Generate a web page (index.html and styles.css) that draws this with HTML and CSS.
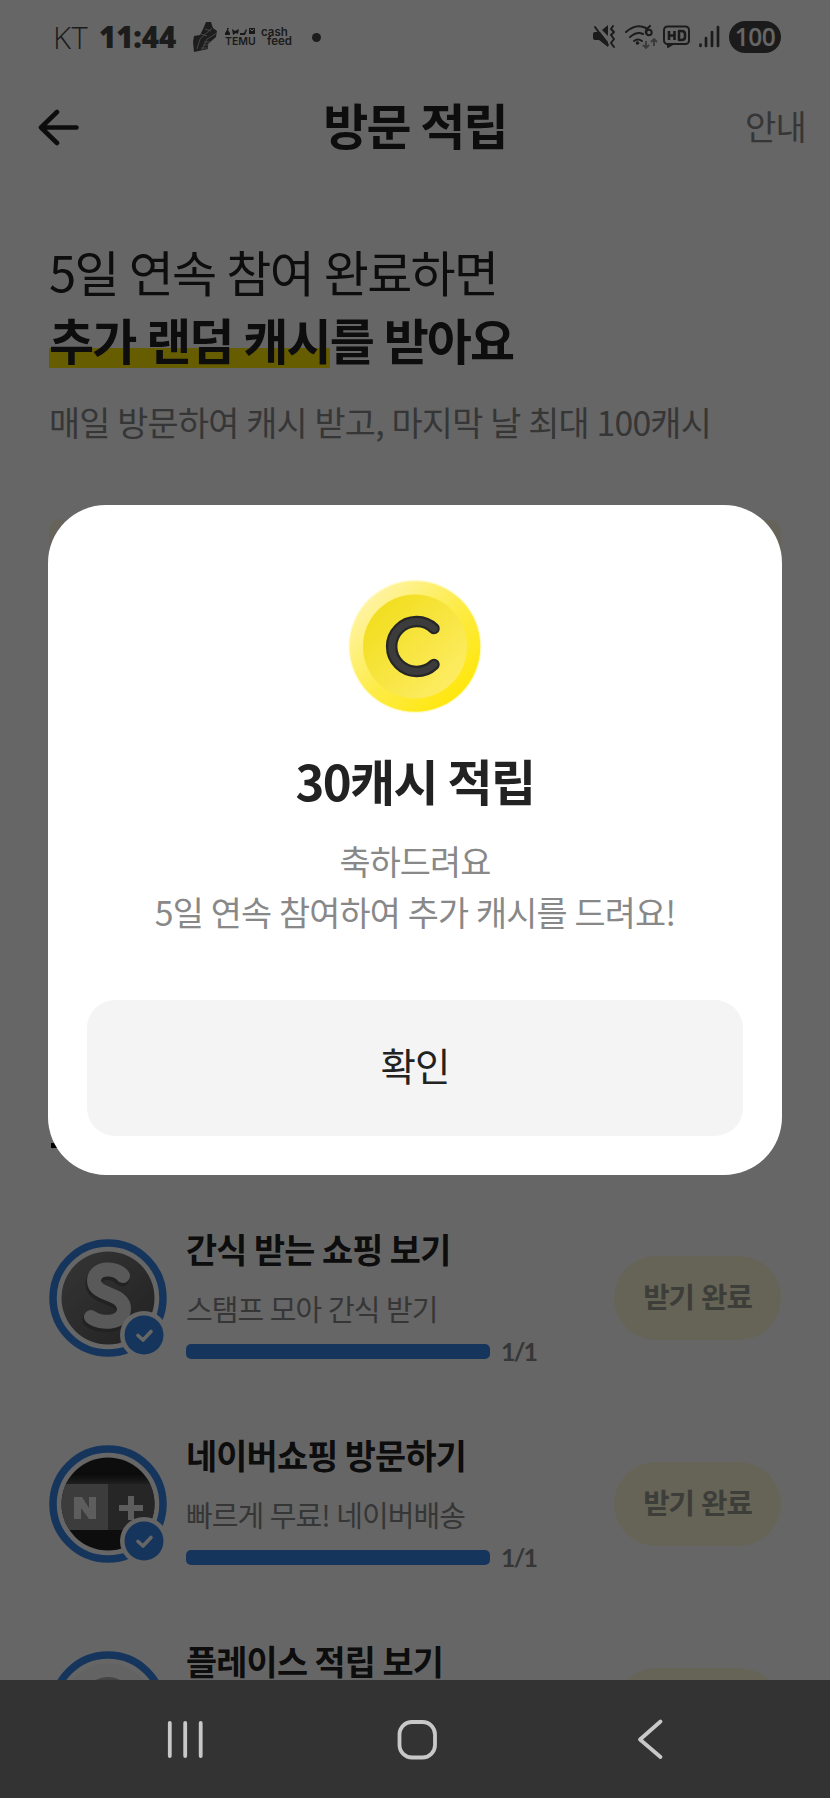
FILE: index.html
```html
<!DOCTYPE html>
<html lang="ko">
<head>
<meta charset="utf-8">
<title>방문 적립</title>
<link rel="stylesheet" href="styles.css">
</head>
<body>
<div class="screen">
  <main class="page">
    <div class="status">
      <span class="carrier">KT</span>
      <span class="clock">11:44</span>
      <svg class="shoe" width="26" height="32" viewBox="0 0 26 32"><path d="M14 1 19 1 21 7 25 10 24 16 16 23 16 28 2 31 1 21 2 15 8 14 11 8Z" fill="#4a4a4a"/><path d="M20 7 8 18 5 28M25 12 15 18 10 29M12 21h7M11 24h6M9 27h7M13 8l6 2M9 13l6 2" stroke="#b9b9b9" stroke-width=".9" fill="none"/></svg>
      <span class="temu"><svg width="30" height="7" viewBox="0 0 30 7"><path d="M2 0h2l-1 2 2 3v2H0V5l2-3ZM7 1l3 2 4-2-1 5-2-1-3 2ZM15 5h4l2-4 1 1-2 5h-5ZM24 0h6v6h-6Z" fill="#3f3f3f"/><path d="m25 1 2 2 2-2" stroke="#fff" fill="none"/></svg><b>TEMU</b></span>
      <span class="cashfeed"><b>cash</b><b class="feed">feed</b></span>
      <i class="dot"></i>
      <span class="spacer"></span>
      <svg width="190" height="34" viewBox="592 20 190 34" class="sysicons">
        <g fill="#454545" stroke="none"><path d="M593 34q0-2 2-2h5l8 10v5l-9-7h-4q-2 0-2-2ZM602 30l6-5v11Z"/></g>
        <g fill="none" stroke="#454545" stroke-width="2" stroke-linecap="round" stroke-linejoin="round">
          <path d="m595 27 13 18"/><path d="m613 26-2 3 3 3-3 3 3 4-3 4 3 4" />
          <path d="M626 32q10-9 20-4M630 37q7-6 13-3M634 41q4-3 8 0"/><path d="M650 26q-5 4-4 7" stroke-width="2.2"/><circle cx="649" cy="32.500" r="2.700"/>
          <rect x="664" y="26.500" width="25" height="17.500" rx="3.500"/><path d="M668 44v3l5-3"/>
          <path d="M669 31v9M674.500 31v9M669 35.500h5.500M679 31v9h2.500q3.500 0 3.500-3v-3q0-3-3.500-3Z" stroke-width="2.600" stroke-linecap="butt"/>
          <path d="M700.500 44.500v1.500M706 38v8M712 32v14M718 27v19" stroke-width="2.700"/>
        </g>
        <circle cx="637.500" cy="43" r="1.800" fill="#454545"/>
        <path d="M646 41v7m-3-3 3 3 3-3M654 46v-7m-3 3 3-3 3 3" fill="none" stroke="#8f8f8f" stroke-width="1.800"/>
      </svg>
      <span class="battery">100</span>
    </div>
    <header class="bar">
      <svg class="back" width="44" height="38" viewBox="0 0 44 38"><path d="M20 4 4 19.500l16 15.500M4 19.500h35.500" fill="none" stroke="#222" stroke-width="4.600" stroke-linecap="round" stroke-linejoin="round"/></svg>
      <h1>방문 적립</h1>
      <span class="guide">안내</span>
    </header>
    <section class="intro">
      <p class="lead">5일 연속 참여 완료하면</p>
      <p class="lead strong"><span class="mark">추가 랜덤 캐시</span>를 받아요</p>
      <p class="sub">매일 방문하여 캐시 받고, 마지막 날 최대 100캐시</p>
    </section>
    <section class="stamps"></section>
    <hr class="rule">
    <ul class="missions">
      <li class="mission">
        <div class="avatar">
          <svg width="118" height="118" viewBox="0 0 118 118">
            <defs><linearGradient id="dark" x1="0" x2="1" y2="1"><stop stop-color="#858585"/><stop offset="1" stop-color="#555"/></linearGradient></defs>
            <circle cx="59" cy="59" r="55" fill="#fff" class="ring"/>
            <circle cx="59" cy="59" r="46.500" fill="url(#dark)"/>
            <path d="M74 38C68 29 45 28 45 43C45 58 75 54 75 71C75 87 50 86 42 79" fill="none" stroke="#555" stroke-width="15" stroke-linecap="round" transform="translate(-1 2)"/>
            <path d="M74 37C68 28 45 27 45 42C45 57 75 53 75 70C75 86 50 85 42 78" fill="none" stroke="#dedede" stroke-width="14" stroke-linecap="round"/>
          </svg>
          <svg class="badge" width="48" height="48" viewBox="0 0 48 48"><circle cx="24" cy="24" r="24" fill="#fff"/><circle cx="24" cy="24" r="19.500" class="blue"/><path d="m18 24.500 5 4.500 8-8.500" fill="none" stroke="#fff" stroke-width="3.600" stroke-linecap="round" stroke-linejoin="round"/></svg>
        </div>
        <div class="info"><h2>간식 받는 쇼핑 보기</h2><p>스탬프 모아 간식 받기</p><div class="progress"><i></i><b>1/1</b></div></div>
        <span class="done">받기 완료</span>
      </li>
      <li class="mission">
        <div class="avatar">
          <svg width="118" height="118" viewBox="0 0 118 118">
            <defs><clipPath id="disc"><circle cx="59" cy="59" r="46.500"/></clipPath><linearGradient id="lid" x2="0" y2="1"><stop stop-color="#181818"/><stop offset="1" stop-color="#555"/></linearGradient></defs>
            <circle cx="59" cy="59" r="55" fill="#fff" class="ring"/>
            <g clip-path="url(#disc)"><path fill="#222" d="M0 0h118v118H0z"/><path d="M26 28h66l14 12H12Z" fill="url(#lid)"/><path d="M10 39h49v46H10z" fill="#969696"/><path d="M59 39h50v46H59z" fill="#606060"/></g>
            <path d="M25 74V52h8l7 11V52h7v22h-7l-8-11v11Z" fill="#e8e8e8"/><path d="M82 51v24M70 63h24" stroke="#e8e8e8" stroke-width="6" />
          </svg>
          <svg class="badge" width="48" height="48" viewBox="0 0 48 48"><circle cx="24" cy="24" r="24" fill="#fff"/><circle cx="24" cy="24" r="19.500" class="blue"/><path d="m18 24.500 5 4.500 8-8.500" fill="none" stroke="#fff" stroke-width="3.600" stroke-linecap="round" stroke-linejoin="round"/></svg>
        </div>
        <div class="info"><h2>네이버쇼핑 방문하기</h2><p>빠르게 무료! 네이버배송</p><div class="progress"><i></i><b>1/1</b></div></div>
        <span class="done">받기 완료</span>
      </li>
      <li class="mission">
        <div class="avatar"><svg width="118" height="118" viewBox="0 0 118 118"><circle cx="59" cy="59" r="55" fill="#fff" class="ring"/><circle cx="59" cy="59" r="46.500" fill="#f7f7f7"/><circle cx="59" cy="52" r="26" fill="#aaa"/></svg></div>
        <div class="info"><h2>플레이스 적립 보기</h2></div>
        <span class="done"></span>
      </li>
    </ul>
  </main>
  <div class="overlay">
    <div class="modal">
      <svg class="coin" width="136" height="136" viewBox="0 0 136 136">
        <defs>
          <linearGradient id="rim" x1=".15" y1=".15" x2=".85" y2=".85"><stop stop-color="#fff3a0"/><stop offset=".5" stop-color="#fdec4a"/><stop offset="1" stop-color="#ffe70e"/></linearGradient>
          <linearGradient id="face" x1=".15" y1=".15" x2=".85" y2=".85"><stop stop-color="#f2de20"/><stop offset="1" stop-color="#fdec62"/></linearGradient>
        </defs>
        <circle cx="68" cy="68.500" r="66.500" fill="#fffbc8"/>
        <circle cx="68" cy="68.500" r="65.300" fill="url(#rim)"/>
        <circle cx="68" cy="68.500" r="52" fill="url(#face)"/>
        <path d="M87 50.500A25 25 0 1 0 87 86.500" fill="none" stroke="#262626" stroke-width="11.500" stroke-linecap="round"/>
        <path d="M87 50.500A25 25 0 1 0 87 86.500" fill="none" stroke="#3c3c3c" stroke-width="7" stroke-linecap="round"/>
      </svg>
      <h2 class="modal-title">30캐시 적립</h2>
      <p class="modal-text">축하드려요<br>5일 연속 참여하여 추가 캐시를 드려요!</p>
      <button class="confirm">확인</button>
    </div>
  </div>
  <nav class="navbar">
    <svg width="830" height="118" viewBox="0 0 830 118"><g fill="none" stroke="#c8c8c8" stroke-width="3.800" stroke-linecap="round" stroke-linejoin="round"><path d="M169.800 43v33M185.200 43v33M200.700 43v33"/><rect x="399.500" y="42" width="35.500" height="35.500" rx="12.500"/><path d="M660.500 41.500 640 59.500l20.500 17.500"/></g></svg>
  </nav>
</div>
</body>
</html>
```
FILE: styles.css
```css
* { box-sizing: border-box; margin: 0; padding: 0; }
body { font-family: "Noto Sans CJK KR", sans-serif; color: #222; background: #fff; }
.screen { position: relative; width: 830px; height: 1798px; overflow: hidden; }
.page { height: 1680px; overflow: hidden; }

.status { display: flex; align-items: center; height: 74px; padding: 0 49px 0 53px; color: #484848; }
.carrier { width: 46px; font: 300 31px/1 "Open Sans", sans-serif; letter-spacing: .5px; }
.clock { width: 93px; font: 800 29.500px/1 "Open Sans", sans-serif; letter-spacing: -.1px; }
.temu { display: flex; flex-direction: column; width: 36px; margin-left: 7px; font: 600 10.500px/10px Inter, sans-serif; }
.temu b, .cashfeed b { font-weight: 600; }
.temu svg { margin-bottom: 2px; }
.cashfeed { display: flex; flex-direction: column; width: 31px; font: 600 11.500px/9.500px Inter, sans-serif; }
.feed { align-self: flex-end; }
.dot { width: 9px; height: 9px; margin-left: 20px; border-radius: 50%; background: #484848; }
.spacer { flex: 1; }
.sysicons { flex: none; margin-right: -53px; }
.battery { width: 52px; height: 32px; border-radius: 16px; background: #444; color: #fff; font: 600 24.500px/32px "Open Sans", sans-serif; text-align: center; letter-spacing: -.5px; z-index: 1; }

.bar { display: grid; grid-template-columns: 1fr auto 1fr; align-items: center; height: 106px; padding: 0 24px; }
.back { margin-left: 13px; }
.bar h1 { margin-top: -7px; font-size: 49px; line-height: 60px; font-weight: 700; letter-spacing: -1.900px; word-spacing: -1.200px; }
.guide { justify-self: end; margin-top: -3px; color: #888; font-size: 34px; letter-spacing: -.800px; }

.intro { height: 343px; padding: 57px 0 0 49px; white-space: nowrap; }
.lead { font-size: 49px; line-height: 68px; letter-spacing: -1.700px; word-spacing: -1.200px; }
.strong { font-weight: 700; letter-spacing: -1.850px; }
.mark { background: linear-gradient(#ffe500, #ffe500) 0 43px / 100% 20px no-repeat; display: inline-block; height: 68px; vertical-align: top; }
.sub { margin-top: 24px; color: #888; font-size: 33.800px; line-height: 50px; letter-spacing: -.780px; word-spacing: -1px; }
.stamps { height: 560px; margin: -4px 49px 0; border-radius: 12px; background: #fffbe0; }
.rule { width: 400px; height: 5px; margin: 64px 0 0 51px; border: 0; background: #000; }

.missions { list-style: none; padding: 91px 49px 0; }
.mission { display: flex; align-items: center; height: 118px; margin-bottom: 88px; }
.avatar { position: relative; width: 137px; height: 118px; }
.ring { stroke: #3585e8; stroke-width: 7.500px; }
.blue { fill: #3585e8; }
.badge { position: absolute; left: 71px; top: 72px; }
.info { flex: 1; align-self: flex-start; margin-top: -14px; white-space: nowrap; }
.info h2 { font-size: 33.800px; line-height: 48px; font-weight: 700; letter-spacing: -.800px; word-spacing: -1.300px; }
.info p { margin-top: 15px; color: #888; font-size: 29px; line-height: 40px; letter-spacing: -.980px; word-spacing: -.4px; }
.progress { display: flex; align-items: center; gap: 11px; height: 28px; margin-top: 9px; }
.progress i { width: 304px; height: 15px; border-radius: 5px; background: #3585e8; }
.progress b { color: #888; font: 700 25px/28px Lato, sans-serif; letter-spacing: -1.800px; }
.done { width: 167px; height: 84px; border-radius: 42px; background: #fff9d6; color: #999990; font-size: 28.700px; line-height: 80px; font-weight: 700; letter-spacing: -1px; text-align: center; }

.overlay { position: absolute; left: 0; top: 0; width: 830px; height: 1680px; display: flex; align-items: center; justify-content: center; background: rgba(0, 0, 0, .6); z-index: 2; }
.modal { display: flex; flex-direction: column; align-items: center; width: 734px; height: 670px; padding: 73px 39px 39px; border-radius: 58px; background: #fff; }
.modal-title { margin-top: 30px; font-size: 49px; line-height: 72px; font-weight: 700; letter-spacing: -1.700px; word-spacing: -1.200px; }
.modal-text { margin-top: 19px; color: #888; font-size: 33.800px; line-height: 51px; letter-spacing: -.860px; word-spacing: -.8px; text-align: center; }
.confirm { width: 656px; height: 136px; margin-top: auto; padding-bottom: 7px; border: 0; border-radius: 28px; background: #f4f4f4; color: #222; font: 400 38.500px/1 "Noto Sans CJK KR", sans-serif; letter-spacing: -1px; }

.navbar { height: 118px; background: #333; }
.navbar svg { display: block; }
```
